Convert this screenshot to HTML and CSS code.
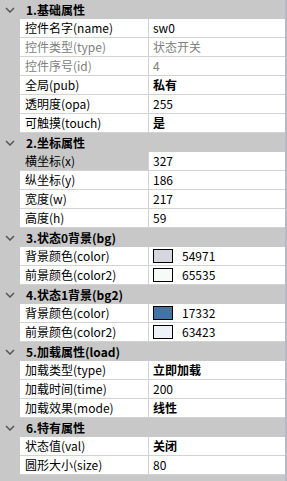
FILE: index.html
```html
<!DOCTYPE html>
<html lang="zh-CN">
<head>
    <meta charset="UTF-8">
    <title>属性面板</title>
    <link rel="stylesheet" href="styles.css">
</head>
<body>
    <div class="panel">
        <div class="group">
            <svg class="arrow" width="10" height="6" viewBox="0 0 10 6"><polyline points="1,1 5,5 9,1" fill="none" stroke="#555" stroke-width="1.5"/></svg>
            <span>1.基础属性</span>
        </div>
        <div class="row"><div class="name">控件名字(name)</div><div class="value">sw0</div></div>
        <div class="row off"><div class="name">控件类型(type)</div><div class="value">状态开关</div></div>
        <div class="row off"><div class="name">控件序号(id)</div><div class="value">4</div></div>
        <div class="row"><div class="name">全局(pub)</div><div class="value bold">私有</div></div>
        <div class="row"><div class="name">透明度(opa)</div><div class="value">255</div></div>
        <div class="row"><div class="name">可触摸(touch)</div><div class="value bold">是</div></div>

        <div class="group">
            <svg class="arrow" width="10" height="6" viewBox="0 0 10 6"><polyline points="1,1 5,5 9,1" fill="none" stroke="#555" stroke-width="1.5"/></svg>
            <span>2.坐标属性</span>
        </div>
        <div class="row sel"><div class="name">横坐标(x)</div><div class="value">327</div></div>
        <div class="row"><div class="name">纵坐标(y)</div><div class="value">186</div></div>
        <div class="row"><div class="name">宽度(w)</div><div class="value">217</div></div>
        <div class="row"><div class="name">高度(h)</div><div class="value">59</div></div>

        <div class="group">
            <svg class="arrow" width="10" height="6" viewBox="0 0 10 6"><polyline points="1,1 5,5 9,1" fill="none" stroke="#555" stroke-width="1.5"/></svg>
            <span>3.状态0背景(bg)</span>
        </div>
        <div class="row"><div class="name">背景颜色(color)</div><div class="value"><i class="swatch c54971"></i>54971</div></div>
        <div class="row"><div class="name">前景颜色(color2)</div><div class="value"><i class="swatch c65535"></i>65535</div></div>

        <div class="group">
            <svg class="arrow" width="10" height="6" viewBox="0 0 10 6"><polyline points="1,1 5,5 9,1" fill="none" stroke="#555" stroke-width="1.5"/></svg>
            <span>4.状态1背景(bg2)</span>
        </div>
        <div class="row"><div class="name">背景颜色(color)</div><div class="value"><i class="swatch c17332"></i>17332</div></div>
        <div class="row"><div class="name">前景颜色(color2)</div><div class="value"><i class="swatch c63423"></i>63423</div></div>

        <div class="group">
            <svg class="arrow" width="10" height="6" viewBox="0 0 10 6"><polyline points="1,1 5,5 9,1" fill="none" stroke="#555" stroke-width="1.5"/></svg>
            <span>5.加载属性(load)</span>
        </div>
        <div class="row"><div class="name">加载类型(type)</div><div class="value bold">立即加载</div></div>
        <div class="row"><div class="name">加载时间(time)</div><div class="value">200</div></div>
        <div class="row"><div class="name">加载效果(mode)</div><div class="value bold">线性</div></div>

        <div class="group">
            <svg class="arrow" width="10" height="6" viewBox="0 0 10 6"><polyline points="1,1 5,5 9,1" fill="none" stroke="#555" stroke-width="1.5"/></svg>
            <span>6.特有属性</span>
        </div>
        <div class="row"><div class="name">状态值(val)</div><div class="value bold">关闭</div></div>
        <div class="row"><div class="name">圆形大小(size)</div><div class="value">80</div></div>
    </div>
</body>
</html>
```

FILE: styles.css
```css
body {
    margin: 0;
    padding: 0;
    background-color: #c8c8c8;
    font-family: "Noto Sans CJK SC", "Noto Sans", sans-serif;
    font-size: 12px;
    color: #000;
}

.panel {
    width: 287px;
    height: 481px;
    background-color: #c8c8c8;
    border-right: 2px solid #b8b8c8;
    box-sizing: border-box;
}

.group {
    height: 19px;
    line-height: 19px;
    display: flex;
    align-items: center;
    font-weight: bold;
}

.group .arrow {
    margin: 0 11px 0 5px;
}

.row {
    display: flex;
    height: 18px;
    margin-left: 20px;
    border-bottom: 1px solid #d2d2d2;
    background-color: #fff;
}

.name {
    width: 123px;
    padding-left: 5px;
    line-height: 18px;
    white-space: nowrap;
    overflow: hidden;
}

.value {
    flex: 1;
    padding-left: 4px;
    line-height: 18px;
    border-left: 1px solid #d2d2d2;
    display: flex;
    align-items: center;
    white-space: nowrap;
}

.row.off .name,
.row.off .value {
    color: #808080;
}

.row.sel .name {
    background-color: #c8c8c8;
}

.bold {
    font-weight: bold;
}

.swatch {
    display: inline-block;
    width: 18px;
    height: 12px;
    border: 1px solid #000;
    margin-right: 9px;
}

.c54971 { background-color: #d6d6de; }
.c65535 { background-color: #f7fbf7; }
.c17332 { background-color: #4275a5; }
.c63423 { background-color: #eef2f8; }
```
